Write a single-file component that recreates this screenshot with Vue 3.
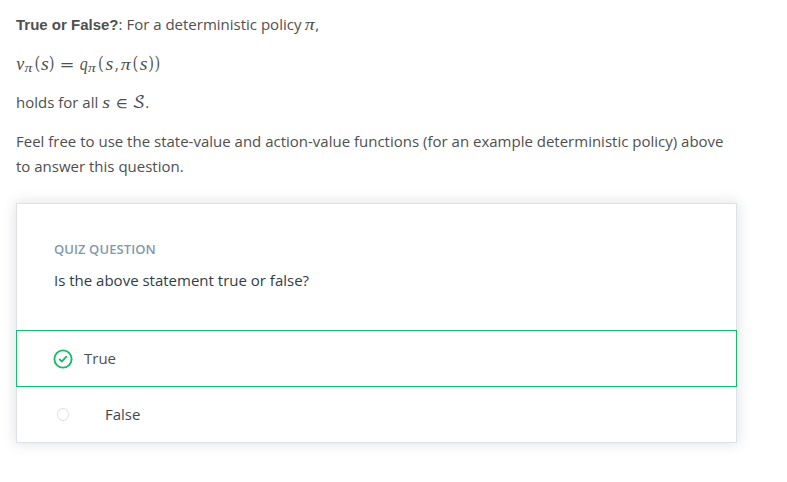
<script setup>
const heading = 'Quiz Question'
const question = 'Is the above statement true or false?'

// Each glyph: character, x, baseline, font size, advance width
const equation = [
  ['v', 0.2, 18.5, 18, 8],
  ['π', 8.6, 21, 13, 7.8],
  ['(', 18, 18, 18, 6],
  ['s', 24.9, 18.5, 18, 7.8],
  [')', 33, 18, 18, 6],
  ['=', 44, 18.5, 16, 14],
  ['q', 63.8, 18.5, 18, 8],
  ['π', 72, 21, 13, 7.8],
  ['(', 81.5, 18, 18, 6],
  ['s', 89.6, 18.5, 18, 7.8],
  [',', 98.8, 18.5, 16, 4],
  ['π', 104.8, 18.5, 17, 10],
  ['(', 116, 18, 18, 6],
  ['s', 123.8, 18.5, 18, 7.8],
  [')', 132.4, 18, 18, 6],
  [')', 138.8, 18, 18, 6],
]
const stateSet = [
  ['s', 0.3, 15, 17, 7.8],
  ['∈', 14, 15, 15, 11.5],
  ['𝒮', 30.2, 15, 16.5, 12.8],
]
const isLetter = (c) => /[vqsπ]/.test(c)
</script>

<template>
  <main class="page">
    <section class="prose">
      <p><strong>True or False?</strong>: For a deterministic policy
        <svg class="math pi" width="10" height="20" viewBox="0 0 10 20"><text class="letter" x="-0.3" y="15" font-size="17" textLength="10" lengthAdjust="spacingAndGlyphs">π</text></svg>,</p>
      <p class="equation">
        <svg class="math" width="150" height="25" viewBox="0 0 150 25">
          <text v-for="(g, i) in equation" :key="i" :class="{ letter: isLetter(g[0]) }" :x="g[1]" :y="g[2]" :font-size="g[3]" :textLength="g[4]" lengthAdjust="spacingAndGlyphs">{{ g[0] }}</text>
        </svg>
      </p>
      <p>holds for all
        <svg class="math set" width="43" height="20" viewBox="0 0 43 20">
          <text v-for="(g, i) in stateSet" :key="i" :class="{ letter: isLetter(g[0]) }" :x="g[1]" :y="g[2]" :font-size="g[3]" :textLength="g[4]" lengthAdjust="spacingAndGlyphs">{{ g[0] }}</text>
        </svg>.</p>
      <p>Feel free to use the state-value and action-value functions (for an example deterministic policy) above to answer this question.</p>
    </section>

    <section class="card">
      <header class="card-head">
        <h2>{{ heading }}</h2>
        <p>{{ question }}</p>
      </header>
      <div class="option selected">
        <svg class="check" width="20" height="20" viewBox="0 0 20 20">
          <circle cx="10" cy="10" r="8.6" />
          <path d="M6.7 10.5 9 12.4 13.3 7.7" />
        </svg>
        <span>True</span>
      </div>
      <div class="option plain">
        <i class="radio"></i>
        <span>False</span>
      </div>
    </section>
  </main>
</template>

<style>
body { background: #fff; }
</style>

<style scoped>
.page {
  box-sizing: border-box;
  width: 753px;
  min-height: 482px;
  padding: 12px 16px 0;
  font: 15px/25px "Open Sans", sans-serif;
  color: #4f4f4f;
}
.prose p { margin: 0 0 14px; height: 25px; }
.prose p:last-child { height: 50px; margin-bottom: 24px; }
.prose strong { font-family: "Liberation Sans", sans-serif; font-weight: 700; }
.math {
  font-family: "DejaVu Math TeX Gyre", "Liberation Serif", serif;
  fill: #4f4f4f;
  overflow: visible;
}
.letter { font-family: "Liberation Serif", serif; font-style: italic; }
.pi, .set { vertical-align: -5px; }
.equation .math { display: block; }
.card {
  box-sizing: border-box;
  width: 721px;
  height: 240px;
  border: 1px solid #dbe2e8;
  box-shadow: 0 0 12px 1px rgba(46, 60, 73, 0.15);
  background: #fff;
}
.card-head { height: 126px; padding: 33px 37px 0; box-sizing: border-box; }
.card-head h2 {
  margin: 0;
  font-size: 13px;
  line-height: 25px;
  font-weight: 600;
  letter-spacing: 0.08px;
  text-transform: uppercase;
  color: #8299ad;
}
.card-head p { margin: 6px 0 0; color: #2e3d49; line-height: 24px; }
.option {
  display: flex;
  align-items: center;
  box-sizing: border-box;
}
.selected {
  height: 57px;
  margin: 0 -1px;
  padding-left: 36px;
  border: 1px solid #15bd66;
}
.check {
  margin-right: 11px;
  fill: none;
  stroke: #15bd66;
  stroke-width: 1.9;
  stroke-linecap: round;
  stroke-linejoin: round;
}
.plain { height: 55px; padding-left: 40px; color: #3f4852; }
.radio {
  box-sizing: border-box;
  width: 12px;
  height: 13px;
  margin-right: 36px;
  border: 1px solid #dbe2e8;
  border-radius: 50%;
}
</style>
